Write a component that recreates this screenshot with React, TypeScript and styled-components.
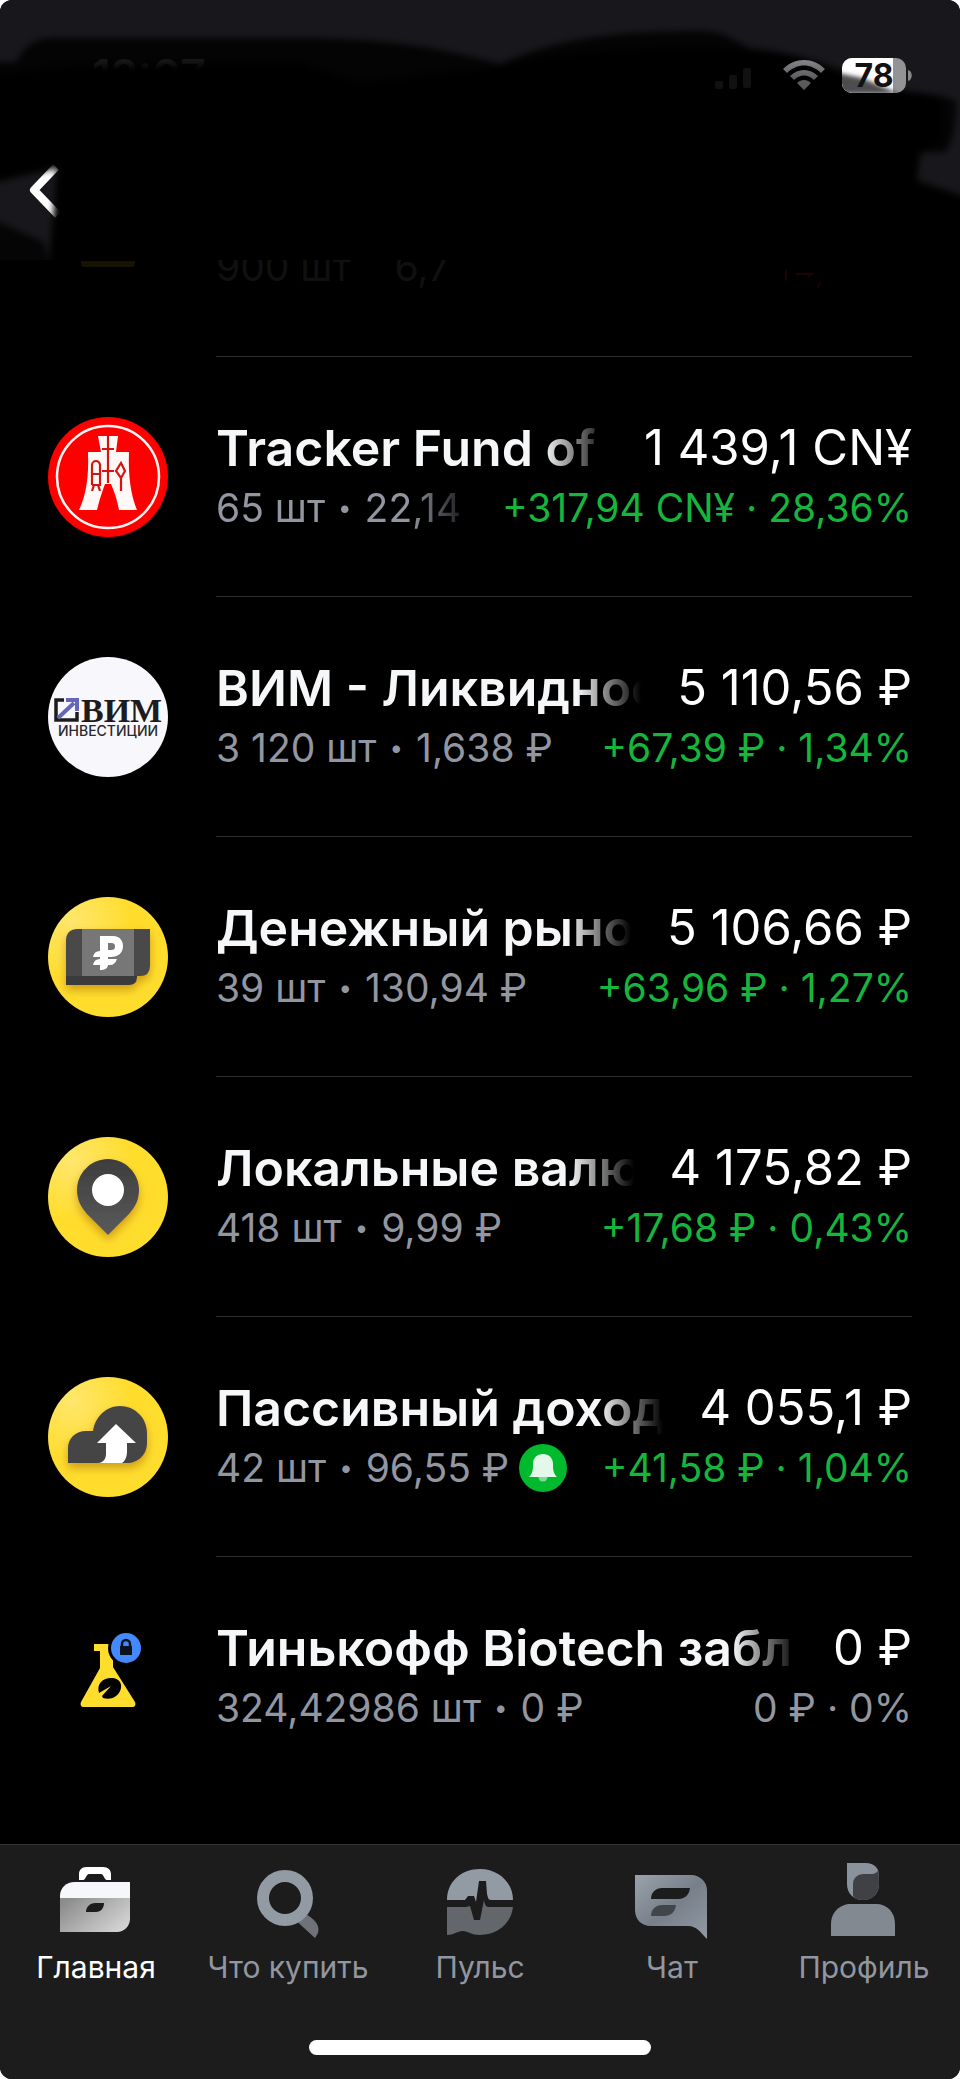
import styled, { createGlobalStyle, css } from 'styled-components';
import type { ReactNode } from 'react';

const GlobalStyle = createGlobalStyle`
  * {
    box-sizing: border-box;
  }
  body {
    margin: 0;
    background: #fff;
    font-family: Inter, 'Liberation Sans', sans-serif;
  }
`;

const Screen = styled.div`
  display: flex;
  flex-direction: column;
  min-height: 100vh;
  overflow: hidden;
  background: #000;
  border-radius: 12px;
`;

const Header = styled.header`
  position: relative;
  display: flex;
  flex-direction: column;
  height: 260px;
  background: #18181c;
`;

const StatusBar = styled.div`
  display: flex;
  align-items: center;
  justify-content: space-between;
  height: 150px;
  padding: 0 48px 0 92px;
`;

const Clock = styled.time`
  font-size: 44px;
  font-weight: 600;
  color: #9a9a9c;
`;

const StatusIcons = styled.div`
  position: relative;
  z-index: 1;
  display: flex;
  align-items: center;
  gap: 16px;
`;

const BackButton = styled.button`
  display: flex;
  width: 48px;
  height: 80px;
  margin-left: 24px;
  padding: 0;
  align-items: center;
  border: 0;
  background: none;
`;

const Shade = styled.svg`
  position: absolute;
  inset: 0;
  width: 100%;
  height: 100%;
  pointer-events: none;
`;

const List = styled.ul`
  flex: 1;
  margin: 0;
  padding: 0;
  list-style: none;
`;

const Row = styled.li`
  display: flex;
  align-items: center;
  gap: 48px;
  height: 240px;
  padding: 0 48px;
`;

const RowBody = styled.div<{ $last?: boolean }>`
  flex: 1;
  min-width: 0;
  height: 240px;
  padding-top: 61px;
  border-bottom: 1px solid ${({ $last }) => ($last ? 'transparent' : '#2e2e30')};
`;

/* the row that is scrolled under the header */
const ScrolledRow = styled(Row)`
  height: 97px;
`;

const ScrolledBody = styled.div`
  display: flex;
  flex: 1;
  justify-content: space-between;
  height: 97px;
  border-bottom: 1px solid #2e2e30;
  overflow: hidden;
  font-size: 39px;
  line-height: 14px;
  color: #101012;
  white-space: pre;
`;

const Line = styled.div`
  display: flex;
  align-items: center;
  justify-content: space-between;
  height: 60px;
`;

const fade = css`
  mask-image: linear-gradient(to right, #000 calc(100% - 64px), transparent);
`;

const Name = styled.span`
  flex: 1;
  min-width: 0;
  margin-right: 36px;
  overflow: hidden;
  white-space: nowrap;
  font-size: 50px;
  line-height: 60px;
  font-weight: 600;
  color: #f6f7f8;
  ${fade}
`;

const Amount = styled.span`
  white-space: nowrap;
  font-size: 49px;
  line-height: 60px;
  color: #fff;
`;

const Quantity = styled.span<{ $fade?: boolean }>`
  display: flex;
  align-items: center;
  min-width: 0;
  overflow: hidden;
  white-space: nowrap;
  font-size: 39px;
  line-height: 48px;
  color: #9296a0;

  svg {
    margin-left: 10px;
  }

  ${({ $fade }) => $fade && css`
    flex: 1;
    margin-right: 28px;
    ${fade}
  `}
`;

const Bullet = styled.span`
  margin: 0 13px;
  font-size: 24px;
`;

const Profit = styled.span<{ $flat?: boolean }>`
  white-space: nowrap;
  font-size: 39px;
  line-height: 48px;
  color: ${({ $flat }) => ($flat ? '#9296a0' : '#16b53c')};
`;

const Dock = styled.footer`
  height: 235px;
  border-top: 1px solid #353535;
  background: #1c1c1c;
`;

const Tabs = styled.nav`
  display: grid;
  grid-template-columns: repeat(5, 1fr);
`;

const Tab = styled.a<{ $active?: boolean }>`
  display: flex;
  flex-direction: column;
  align-items: center;
  gap: 8px;
  padding-top: 12px;
  font-size: 30px;
  line-height: 36px;
  white-space: nowrap;
  text-decoration: none;
  color: ${({ $active }) => ($active ? '#fff' : '#9296a0')};
`;

const HomeIndicator = styled.div`
  width: 342px;
  height: 15px;
  margin: 55px auto 0;
  border-radius: 8px;
  background: #fff;
`;

const WifiIcon = () => (
  <svg width="44" height="34" viewBox="0 0 44 34">
    <defs>
      <linearGradient id="wifi" x1="0" y1="0" x2="0" y2="1">
        <stop offset="0" stopColor="#868688" />
        <stop offset="0.6" stopColor="#5c5c5e" />
        <stop offset="1" stopColor="#58585a" />
      </linearGradient>
    </defs>
    <path
      d="M22 32l-7-7c4-4 10-4 14 0zM8 18c8-8 20-8 28 0l-4 4c-6-6-14-6-20 0zM1 11C13-1 31-1 43 11l-4 4C29 5 15 5 5 15z"
      fill="url(#wifi)"
    />
  </svg>
);

const SignalIcon = () => (
  <svg width="52" height="34" viewBox="0 0 52 34" fill="#111113">
    <rect x="1" y="23" width="8" height="8" rx="2" />
    <rect x="15" y="17" width="8" height="14" rx="2" />
    <rect x="29" y="10" width="8" height="20" rx="2" />
  </svg>
);

const BatteryIcon = () => (
  <svg width="70" height="35" viewBox="0 0 70 35">
    <defs>
      <filter id="smear" x="-10%" y="-40%" width="120%" height="180%">
        <feGaussianBlur stdDeviation="2" />
      </filter>
      <clipPath id="cell">
        <rect width="64" height="35" rx="10" />
      </clipPath>
    </defs>
    <g clipPath="url(#cell)">
      <rect width="64" height="35" fill="#939396" />
      <rect width="51" height="35" fill="#fff" />
      <path d="M-8 14L20 20L58 36H-8Z" fill="#4e4e50" filter="url(#smear)" />
    </g>
    <path d="M66 12c5 1 5 10 0 11z" fill="#88888a" />
    <text x="32" y="29" textAnchor="middle" fontSize="32" fontWeight="700" fill="#121214">78</text>
  </svg>
);

const BackIcon = () => (
  <svg width="48" height="60" viewBox="0 0 48 60" fill="none">
    <path d="M32 7L10 30l24 25" stroke="#fff" strokeWidth="8" strokeLinejoin="round" />
  </svg>
);

const HeaderShade = () => (
  <Shade viewBox="0 0 960 260" preserveAspectRatio="none">
    <defs>
      <filter id="soft" x="-5%" y="-5%" width="110%" height="110%">
        <feGaussianBlur stdDeviation="3" />
      </filter>
    </defs>
    <g filter="url(#soft)">
      <path
        d="M-10 62H16C26 44 36 38 54 38H290C390 38 440 48 500 64C550 42 600 31 700 31C725 31 735 41 750 48C790 52 814 60 842 70L900 91C930 93 952 97 956 102C956 125 952 148 944 152L921 153L917 180L970 198V270H48L57 168L-10 184Z"
        fill="#000"
        opacity="0.85"
      />
      <path
        d="M-10 74H20C40 66 100 66 300 64L360 84L490 68C560 50 680 46 745 50L800 58L860 82L940 98L942 140L917 154V184L970 200V270H50L60 165L-10 182Z"
        fill="#000"
      />
      <path d="M-10 218L44 242L50 270H-10Z" fill="#000" opacity="0.8" />
    </g>
  </Shade>
);

const Disc = ({ id, children }: { id: string; children: ReactNode }) => (
  <svg width="120" height="120" viewBox="0 0 120 120">
    <defs>
      <radialGradient id={`${id}-bg`} cx="0.2" cy="0.2" r="0.7">
        <stop offset="0" stopColor="#ffe66d" />
        <stop offset="0.7" stopColor="#ffdd2d" />
      </radialGradient>
      <linearGradient id={`${id}-ink`} x1="0" y1="0" x2="0" y2="1">
        <stop offset="0" stopColor="#3d3d3d" />
        <stop offset="1" stopColor="#5a5a5a" />
      </linearGradient>
      <filter id={`${id}-shadow`} x="-30%" y="-30%" width="160%" height="170%">
        <feDropShadow dx="0" dy="5" stdDeviation="5" floodColor="#a86b00" floodOpacity="0.55" />
      </filter>
    </defs>
    <circle cx="60" cy="60" r="60" fill={`url(#${id}-bg)`} />
    {children}
  </svg>
);

const TrackerLogo = () => (
  <svg width="120" height="120" viewBox="0 0 120 120">
    <circle cx="60" cy="60" r="60" fill="#fe0000" />
    <circle cx="60" cy="60" r="51" fill="none" stroke="#fff5f5" strokeWidth="2.5" />
    <path d="M50 19H70L68 35H81C80 60 83 78 89 93H71C69 82 66 74 63 67H57C54 75 51 84 49 93H31C38 78 41 60 40 35H53Z" fill="#fff8f6" />
    <g fill="none" stroke="#d4140f" strokeWidth="2.2">
      <path d="M60 19V66M54 32H66M54 54H66" />
      <path d="M44 68V48a3.5 3.5 0 0 1 8 0V68H44M44 57H52M46 68L44 74M50 68L52 74" />
      <path d="M73 46L77 54L73 61L68 54ZM73 61V74" />
    </g>
  </svg>
);

const VimLogo = () => (
  <svg width="120" height="120" viewBox="0 0 120 120">
    <circle cx="60" cy="60" r="60" fill="#f8f8fc" />
    <path d="M16 43H8V63H29V55" fill="none" stroke="#1c1c1e" strokeWidth="3.5" />
    <path d="M10 61L26 46" stroke="#6566bb" strokeWidth="4" />
    <path d="M18 41H31V54H27V45H18Z" fill="#6566bb" />
    <text x="33" y="65" fontFamily="'Liberation Serif', serif" fontSize="34" fontWeight="700" fill="#1c1c1e">ВИМ</text>
    <text x="60" y="79" textAnchor="middle" fontSize="14" fontWeight="500" fill="#2a2a2c">ИНВЕСТИЦИИ</text>
  </svg>
);

const CashLogo = () => (
  <Disc id="cash">
    <g filter="url(#cash-shadow)">
      <path d="M18 60H89V80Q89 88 81 88H18Z" fill="#3b3b3b" />
      <path d="M18 44Q18 32 30 32H102V69Q102 79 92 79H18Z" fill="#484848" />
    </g>
    <rect x="34" y="32" width="52" height="47" fill="#777" />
    <path
      fillRule="evenodd"
      d="M52 39H65C71 39 75 43 75 49C75 56 70 60 63 60H60V62H69Q67 68 62 68H60C60 71 57 73 52 73V68H45Q46 62 52 62V60H45Q46 54 52 54ZM60 46V53H63C66 53 67 52 67 49.5C67 47 66 46 63 46Z"
      fill="#fff"
    />
  </Disc>
);

const PinLogo = () => (
  <Disc id="pin">
    <path filter="url(#pin-shadow)" d="M60 22C77 22 91 36 91 53C91 63 87 70 81 77L60 98L39 77C33 70 29 63 29 53C29 36 43 22 60 22Z" fill="url(#pin-ink)" />
    <circle cx="60" cy="53" r="16" fill="#fff" />
  </Disc>
);

const CloudLogo = () => (
  <Disc id="cloud">
    <path filter="url(#cloud-shadow)" d="M20 86V71C20 61 28 54 38 54H45C47 40 58 29 72 29C87 29 99 41 99 56V66C99 78 90 86 79 86Z" fill="#454545" />
    <path d="M68 47L88 66H79V74C79 80 77 84 74 86H51C56 85 58 81 58 77V66H49Z" fill="#fff" />
  </Disc>
);

const FlaskLogo = () => (
  <svg width="120" height="120" viewBox="0 0 120 120">
    <path d="M46 27H68V33H65V50L87 85C88 88 87 90 84 90H36C33 90 32 88 33 85L52 51V34H46Z" fill="#ffdd2d" />
    <path d="M51 76C48 66 56 60 65 61C71 62 74 66 73 71C72 78 64 84 55 81L54 79L63 69Z" fill="#000" />
    <circle cx="78" cy="31" r="18" fill="#000" />
    <circle cx="78" cy="31" r="15" fill="#448aff" />
    <rect x="72" y="29" width="12" height="9" fill="#0b1220" />
    <path d="M74 29V27a4 4 0 0 1 8 0V29" fill="none" stroke="#0b1220" strokeWidth="2.5" />
  </svg>
);

const ScrolledLogo = () => (
  <svg width="120" height="97" viewBox="0 0 120 97">
    <path d="M33 1H87V4Q87 7 84 7H36Q33 7 33 4Z" fill="#161300" />
  </svg>
);

const ScrolledProfit = () => (
  <svg width="130" height="40" viewBox="0 0 130 40" stroke="#200204" strokeWidth="2" fill="none">
    <path d="M4 10V20M14 14H30L26 17M38 22l-2 6" />
  </svg>
);

const BellBadge = () => (
  <svg width="48" height="48" viewBox="0 0 48 48" role="img" aria-label="Уведомление">
    <circle cx="24" cy="24" r="24" fill="#00b92d" />
    <circle cx="24" cy="33" r="4.5" fill="#7fdb95" />
    <path d="M10 33C14 29 14 25 14 20C14 14 18 10 24 10S34 14 34 20C34 25 34 29 38 33Z" fill="#e3f8e8" />
  </svg>
);

const BriefcaseIcon = () => (
  <svg width="84" height="84" viewBox="0 0 84 84">
    <defs>
      <linearGradient id="case" x1="0" y1="0.2" x2="1" y2="0.8">
        <stop offset="0" stopColor="#8c8c8c" />
        <stop offset="1" stopColor="#d6d6d6" />
      </linearGradient>
    </defs>
    <path d="M25 23V17C25 13 28 10 32 10H49C54 10 57 13 57 17V23H53C50 23 50 17 47 17H35C32 17 32 23 29 23Z" fill="#fff" />
    <path d="M6 41V39C6 31 12 25 21 25H76V41Z" fill="#f6f7fa" />
    <path fillRule="evenodd" d="M6 41H76V62C76 69 70 75 63 75H6ZM32 55H42C47 55 50 51 50 46H41C36 46 32 50 32 55Z" fill="url(#case)" />
  </svg>
);

const SearchIcon = () => (
  <svg width="84" height="84" viewBox="0 0 84 84">
    <path d="M46 60L54 53C65 60 75 66 72 76L69 81Z" fill="#6f7278" />
    <circle cx="39" cy="41" r="22" fill="#1c1c1c" stroke="#929aa4" strokeWidth="12" />
  </svg>
);

const PulseIcon = () => (
  <svg width="84" height="84" viewBox="0 0 84 84">
    <path d="M9 43C9 25 23 12 42 12C61 12 75 26 75 43H53C50 43 50 40 49 37L48 24H41L38 45L36 39H30L27 43Z" fill="#929aa4" />
    <path d="M9 50H28L32 49L36 63H42L46 43C47 50 49 50 53 50H75C73 67 59 78 42 78C33 78 30 74 25 74C19 74 16 78 9 78Z" fill="#63666b" />
  </svg>
);

const ChatIcon = () => (
  <svg width="84" height="84" viewBox="0 0 84 84">
    <defs>
      <linearGradient id="chat" x1="0" y1="0" x2="1" y2="1">
        <stop offset="0" stopColor="#9aa2ab" />
        <stop offset="0.5" stopColor="#77808a" />
        <stop offset="1" stopColor="#929aa4" />
      </linearGradient>
    </defs>
    <path d="M5 18H61C70 18 77 25 77 33V82C71 76 67 69 58 69H21C11 69 5 62 5 53Z" fill="url(#chat)" />
    <path d="M21 42C21 35 26 31 32 31H60C59 38 55 42 48 42Z" fill="#1c1c1c" />
    <path d="M21 59C21 52 26 48 32 48H46C45 55 41 59 34 59Z" fill="#42464b" />
  </svg>
);

const ProfileIcon = () => (
  <svg width="84" height="84" viewBox="0 0 84 84">
    <path d="M25 6H44C52 6 57 11 57 19V27C57 37 50 43 41 43C32 43 25 37 25 27Z" fill="#8a929b" />
    <path d="M31 39V28C31 21 35 17 42 17H49C53 17 56 15 56 13C57 16 57 20 57 27C57 37 50 43 41 43C37 43 33 42 31 39Z" fill="#3f4144" />
    <path d="M9 79V67C9 55 18 47 29 47H54C65 47 73 55 73 67V79Z" fill="#838991" />
  </svg>
);

const holdings = [
  { logo: <TrackerLogo />, name: 'Tracker Fund of', amount: '1 439,1 CN¥', count: '65 шт', price: '22,14', profit: '+317,94 CN¥ · 28,36%', fade: true },
  { logo: <VimLogo />, name: 'ВИМ - Ликвидность', amount: '5 110,56 ₽', count: '3 120 шт', price: '1,638 ₽', profit: '+67,39 ₽ · 1,34%' },
  { logo: <CashLogo />, name: 'Денежный рынок', amount: '5 106,66 ₽', count: '39 шт', price: '130,94 ₽', profit: '+63,96 ₽ · 1,27%' },
  { logo: <PinLogo />, name: 'Локальные валютные', amount: '4 175,82 ₽', count: '418 шт', price: '9,99 ₽', profit: '+17,68 ₽ · 0,43%' },
  { logo: <CloudLogo />, name: 'Пассивный доход', amount: '4 055,1 ₽', count: '42 шт', price: '96,55 ₽', profit: '+41,58 ₽ · 1,04%', bell: true },
  { logo: <FlaskLogo />, name: 'Тинькофф Biotech забл', amount: '0 ₽', count: '324,42986 шт', price: '0 ₽', profit: '0 ₽ · 0%', flat: true },
];

const tabs = [
  { label: 'Главная', icon: <BriefcaseIcon />, active: true },
  { label: 'Что купить', icon: <SearchIcon /> },
  { label: 'Пульс', icon: <PulseIcon /> },
  { label: 'Чат', icon: <ChatIcon /> },
  { label: 'Профиль', icon: <ProfileIcon /> },
];

export default function App() {
  return (
    <>
      <GlobalStyle />
      <Screen>
        <Header>
          <StatusBar>
            <Clock>12:07</Clock>
            <StatusIcons>
              <SignalIcon />
              <WifiIcon />
              <BatteryIcon />
            </StatusIcons>
          </StatusBar>
          <BackButton aria-label="Назад">
            <BackIcon />
          </BackButton>
          <HeaderShade />
        </Header>
        <List>
          <ScrolledRow>
            <ScrolledLogo />
            <ScrolledBody>
              <span>900 шт    6,7</span>
              <ScrolledProfit />
            </ScrolledBody>
          </ScrolledRow>
          {holdings.map((item, index) => (
            <Row key={item.name}>
              {item.logo}
              <RowBody $last={index === holdings.length - 1}>
                <Line>
                  <Name>{item.name}</Name>
                  <Amount>{item.amount}</Amount>
                </Line>
                <Line>
                  <Quantity $fade={item.fade}>
                    {item.count}
                    <Bullet>•</Bullet>
                    {item.price}
                    {item.bell && <BellBadge />}
                  </Quantity>
                  <Profit $flat={item.flat}>{item.profit}</Profit>
                </Line>
              </RowBody>
            </Row>
          ))}
        </List>
        <Dock>
          <Tabs>
            {tabs.map((tab) => (
              <Tab key={tab.label} href="#" $active={tab.active}>
                {tab.icon}
                {tab.label}
              </Tab>
            ))}
          </Tabs>
          <HomeIndicator />
        </Dock>
      </Screen>
    </>
  );
}
